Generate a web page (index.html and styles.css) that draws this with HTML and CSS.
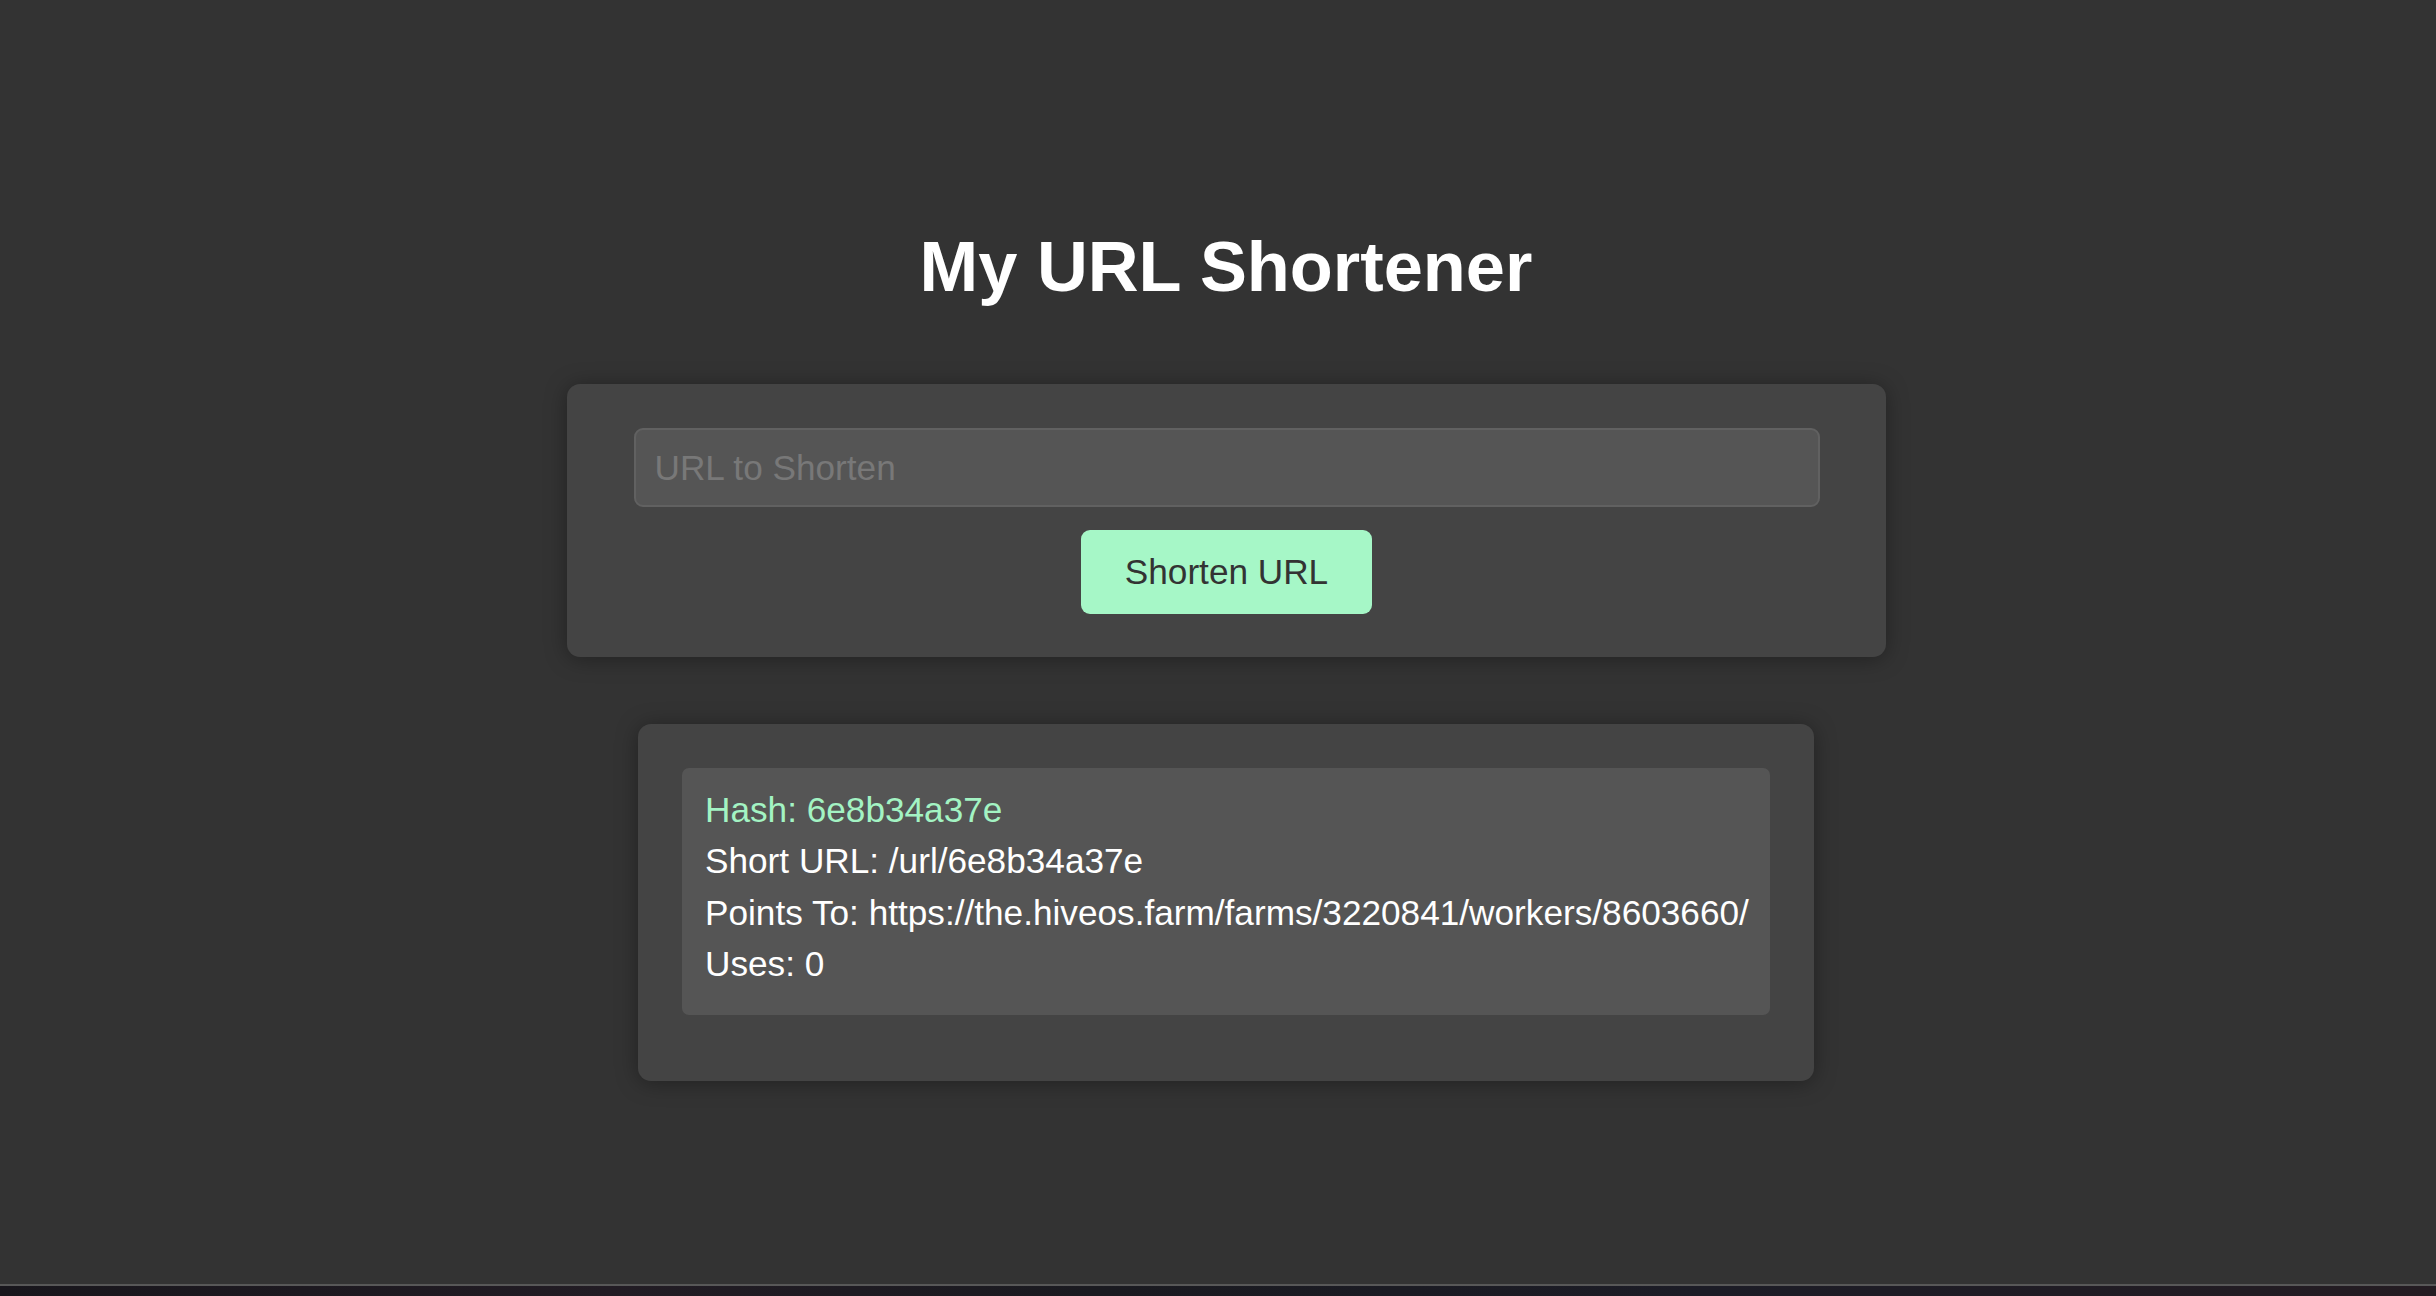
FILE: index.html
```html
<!DOCTYPE html>
<html lang="en">
<head>
<meta charset="utf-8">
<title>My URL Shortener</title>
<link rel="stylesheet" href="styles.css">
</head>
<body>
<main class="page">
  <h1 class="title">My URL Shortener</h1>
  <form class="card form-card">
    <input class="url-input" type="text" placeholder="URL to Shorten">
    <div class="actions">
      <button class="shorten-btn" type="button">Shorten URL</button>
    </div>
  </form>
  <section class="card result-card">
    <div class="result">
      <p class="line hash">Hash: 6e8b34a37e</p>
      <p class="line">Short URL: /url/6e8b34a37e</p>
      <p class="line">Points To: https://the.hiveos.farm/farms/3220841/workers/8603660/</p>
      <p class="line">Uses: 0</p>
    </div>
  </section>
</main>
<div class="dock-strip"></div>
</body>
</html>
```

FILE: styles.css
```css
html, body {
  height: 100%;
}
body {
  margin: 0;
  background: #333333;
  color: #ffffff;
  font-family: "Liberation Sans", Arial, sans-serif;
  font-size: 35.2px;
  display: flex;
  flex-direction: column;
}
.page {
  flex: 1;
  display: flex;
  flex-direction: column;
  align-items: center;
  padding-left: 16px;
}
.title {
  margin: 226px 0 77px;
  font-size: 70.4px;
  font-weight: bold;
  line-height: 81px;
  text-align: center;
}
.card {
  box-sizing: border-box;
  background: #444444;
  border-radius: 13px;
  box-shadow: 0 2px 22px rgba(0, 0, 0, 0.35);
}
.form-card {
  width: 1319px;
  margin: 0;
  padding: 44px 66px 43px 67px;
}
.url-input {
  display: block;
  box-sizing: border-box;
  width: 100%;
  height: 79px;
  margin: 0;
  padding: 0 19px;
  background: #555555;
  border: 2px solid #616161;
  border-radius: 9px;
  color: #ffffff;
  font-family: "Liberation Sans", Arial, sans-serif;
  font-size: 35.2px;
  outline: none;
}
.url-input::placeholder {
  color: #787878;
}
.actions {
  display: flex;
  justify-content: center;
  margin-top: 23px;
}
.shorten-btn {
  height: 84px;
  padding: 0 44px;
  background: #a6f7c7;
  border: none;
  border-radius: 9px;
  color: #333333;
  font-family: "Liberation Sans", Arial, sans-serif;
  font-size: 35.2px;
  cursor: pointer;
}
.result-card {
  width: 1176px;
  margin-top: 67px;
  padding: 44px 44px 44px;
}
.result {
  background: #555555;
  border-radius: 7px;
  padding: 22px 23px 20px;
  margin-bottom: 22px;
}
.line {
  margin: 0 0 11.3px;
  line-height: 40px;
  white-space: nowrap;
}
.hash {
  color: #a3f3c3;
}
.dock-strip {
  box-sizing: border-box;
  height: 12px;
  flex-shrink: 0;
  border-top: 2px solid #585858;
  background: linear-gradient(90deg, #18161c 0%, #221c24 25%, #1a1a20 45%, #1c1c26 70%, #241c22 100%);
}
```
